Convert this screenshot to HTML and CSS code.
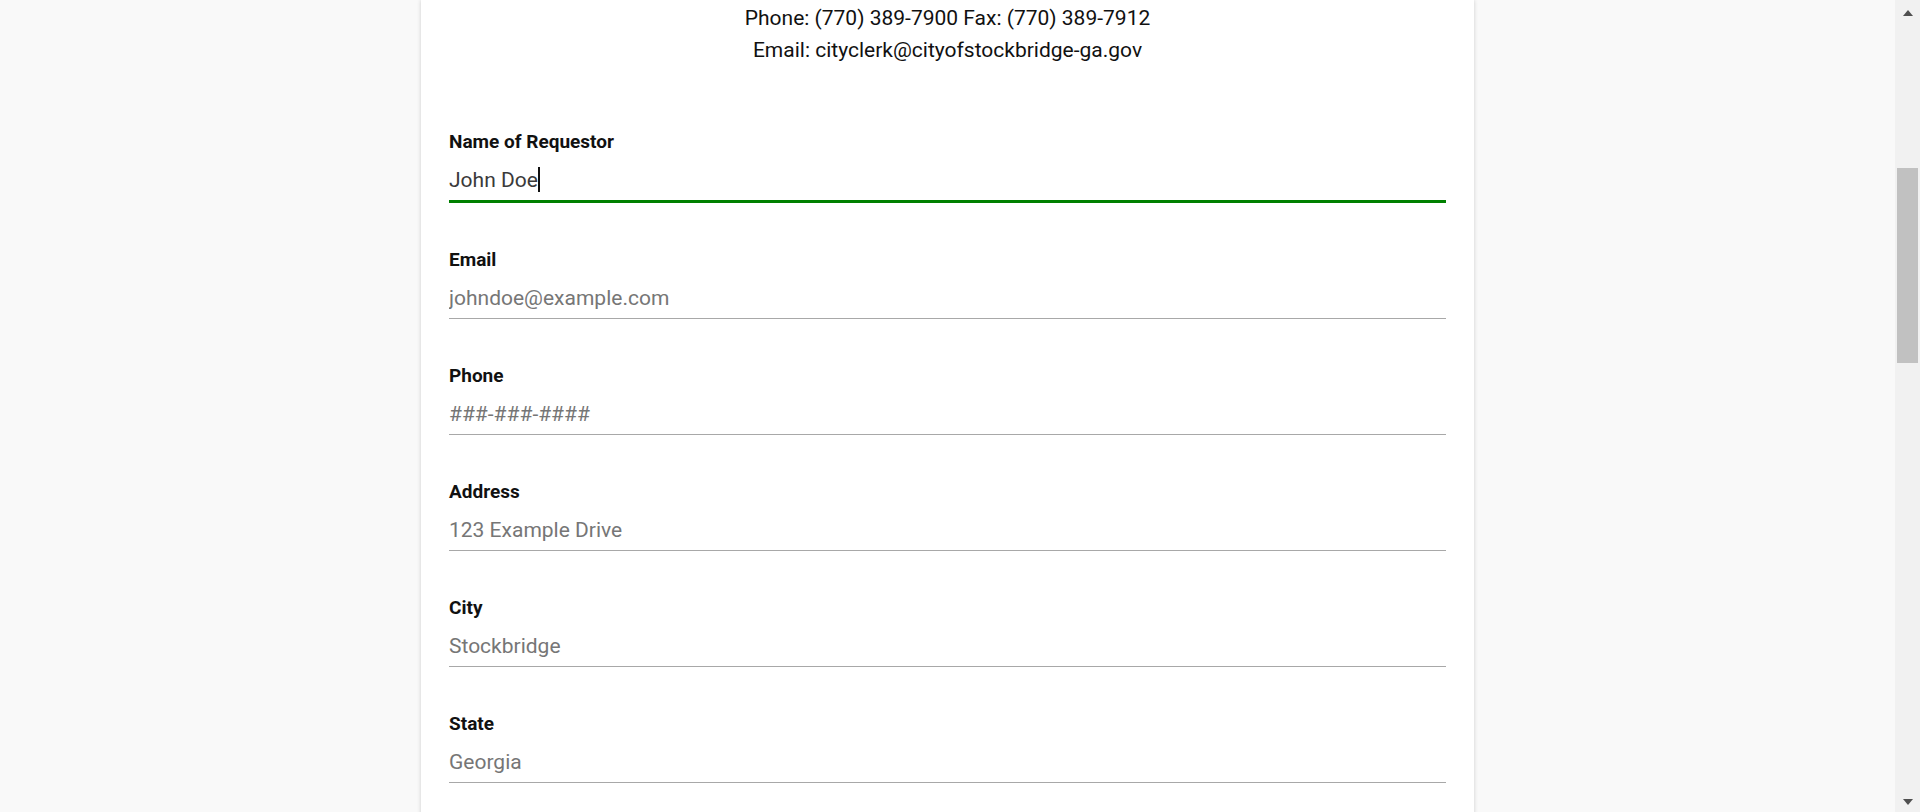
FILE: index.html
```html
<!DOCTYPE html>
<html lang="en">
<head>
<meta charset="utf-8">
<title>Open Records Request</title>
<link rel="stylesheet" href="styles.css">
</head>
<body>
<div class="viewport">
  <main class="page">
    <section class="card">
      <div class="contact">
        <p>Phone: (770) 389-7900 Fax: (770) 389-7912</p>
        <p>Email: cityclerk@cityofstockbridge-ga.gov</p>
      </div>
      <form class="form">
        <div class="field">
          <label class="label" for="name">Name of Requestor</label>
          <div class="input input-focused" id="name"><span class="value">John Doe</span><span class="caret"></span></div>
        </div>
        <div class="field">
          <label class="label" for="email">Email</label>
          <input class="input" id="email" type="text" placeholder="johndoe@example.com">
        </div>
        <div class="field">
          <label class="label" for="phone">Phone</label>
          <input class="input" id="phone" type="text" placeholder="###-###-####">
        </div>
        <div class="field">
          <label class="label" for="address">Address</label>
          <input class="input" id="address" type="text" placeholder="123 Example Drive">
        </div>
        <div class="field">
          <label class="label" for="city">City</label>
          <input class="input" id="city" type="text" placeholder="Stockbridge">
        </div>
        <div class="field">
          <label class="label" for="state">State</label>
          <input class="input" id="state" type="text" placeholder="Georgia">
        </div>
      </form>
    </section>
  </main>
  <div class="scrollbar">
    <div class="arrow arrow-up"></div>
    <div class="track">
      <div class="thumb"></div>
    </div>
    <div class="arrow arrow-down"></div>
  </div>
</div>
</body>
</html>
```
FILE: styles.css
```css
* { box-sizing: border-box; }
html, body {
  margin: 0;
  padding: 0;
  height: 812px;
  overflow: hidden;
}
body {
  background: #f9f9f9;
  font-family: Roboto, "Liberation Sans", sans-serif;
  color: #111;
}
.viewport {
  display: flex;
  height: 812px;
}
.page {
  flex: 1;
  display: flex;
  justify-content: center;
  overflow: hidden;
}
.card {
  width: 1053px;
  min-height: 900px;
  background: #fff;
  box-shadow: 0 0 4px rgba(0, 0, 0, 0.18);
  padding: 2px 28px 0;
}
.contact {
  text-align: center;
  font-size: 21px;
  line-height: 32px;
  color: #111;
}
.contact p { margin: 0; }
.form {
  margin-top: 64px;
  display: flex;
  flex-direction: column;
  gap: 45px;
}
.field {
  display: flex;
  flex-direction: column;
}
.label {
  font-weight: 700;
  font-size: 19px;
  line-height: 24px;
  color: #111;
  margin-bottom: 7px;
}
.input {
  display: flex;
  align-items: center;
  width: 100%;
  height: 40px;
  margin: 0;
  padding: 0 0 2px;
  border: 0;
  border-bottom: 1px solid #a8a8a8;
  background: transparent;
  font-family: Roboto, "Liberation Sans", sans-serif;
  font-size: 21px;
  color: #333;
  outline: none;
}
.input::placeholder { color: #767676; }
.input-focused {
  height: 42px;
  border-bottom: 3px solid #008000;
  padding-bottom: 2px;
}
.value { color: #3a3a3a; }
.caret {
  width: 2px;
  height: 25px;
  background: #111;
}
.scrollbar {
  width: 25px;
  background: #f1f1f1;
  display: flex;
  flex-direction: column;
  align-items: center;
  padding: 10px 0 7px;
}
.arrow {
  width: 0;
  height: 0;
  border-left: 5.5px solid transparent;
  border-right: 5.5px solid transparent;
}
.arrow-up { border-bottom: 6px solid #505050; }
.arrow-down { border-top: 6px solid #505050; }
.track {
  flex: 1;
  width: 100%;
  padding: 152px 2px 0;
}
.thumb {
  width: 21px;
  height: 195px;
  background: #c1c1c1;
}
```
